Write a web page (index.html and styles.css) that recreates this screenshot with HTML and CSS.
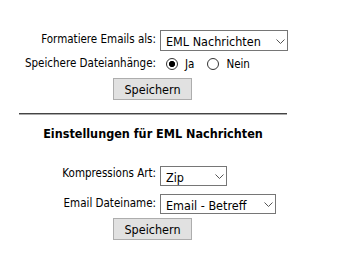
FILE: index.html
```html
<!DOCTYPE html>
<html lang="de">
<head>
    <meta charset="UTF-8">
    <title>Email Export Einstellungen</title>
    <link rel="stylesheet" href="styles.css">
</head>
<body>
    <div class="panel">
        <!-- Allgemeine Einstellungen -->
        <div class="form-grid">
            <label class="label label-mid" for="format">Formatiere Emails als:</label>
            <div class="select-wrap select-wide">
                <select id="format">
                    <option>EML Nachrichten</option>
                </select>
                <svg class="chevron" width="9" height="5" viewBox="0 0 9 5"><path d="M0.5 0.5 L4.5 4.5 L8.5 0.5" fill="none" stroke="#555" stroke-width="1"/></svg>
            </div>

            <span class="label label-mid">Speichere Dateianhänge:</span>
            <div class="radios">
                <label class="radio"><input type="radio" name="att" checked> Ja</label>
                <label class="radio"><input type="radio" name="att"> Nein</label>
            </div>
        </div>
        <div class="actions">
            <button class="btn">Speichern</button>
        </div>

        <hr class="divider">

        <h3 class="section-title">Einstellungen für EML Nachrichten</h3>

        <div class="form-grid grid-eml">
            <label class="label label-top" for="compress">Kompressions Art:</label>
            <div class="select-wrap select-small">
                <select id="compress">
                    <option>Zip</option>
                </select>
                <svg class="chevron" width="9" height="5" viewBox="0 0 9 5"><path d="M0.5 0.5 L4.5 4.5 L8.5 0.5" fill="none" stroke="#555" stroke-width="1"/></svg>
            </div>

            <label class="label label-mid" for="filename">Email Dateiname:</label>
            <div class="select-wrap select-name">
                <select id="filename">
                    <option>Email - Betreff</option>
                </select>
                <svg class="chevron" width="9" height="5" viewBox="0 0 9 5"><path d="M0.5 0.5 L4.5 4.5 L8.5 0.5" fill="none" stroke="#555" stroke-width="1"/></svg>
            </div>
        </div>
        <div class="actions actions-eml">
            <button class="btn">Speichern</button>
        </div>
    </div>
</body>
</html>
```

FILE: styles.css
```css
body {
    margin: 8px;
    background-color: #fff;
    color: #000;
    font-family: "DejaVu Sans Condensed", "DejaVu Sans", sans-serif;
    font-size: 11.5px;
}

.panel {
    width: 290px;
    padding-top: 22px;
}

.form-grid {
    display: grid;
    grid-template-columns: 148px auto;
    column-gap: 4px;
    row-gap: 6px;
    align-items: center;
}

.grid-eml {
    row-gap: 8px;
}

.label {
    text-align: right;
    white-space: nowrap;
}

.label-mid {
    margin-top: -3px;
}

.label-top {
    align-self: start;
}

.select-wrap {
    position: relative;
    height: 21px;
}

.select-wrap select {
    appearance: none;
    -webkit-appearance: none;
    width: 100%;
    height: 100%;
    margin: 0;
    padding: 2px 20px 0 5px;
    border: 1px solid #767676;
    border-radius: 0;
    background-color: #fff;
    color: #000;
    font-family: inherit;
    font-size: 12.5px;
}

.select-wide {
    width: 128px;
}

.select-small {
    width: 67px;
    height: 20px;
}

.select-name {
    width: 116px;
    height: 20px;
}

.chevron {
    position: absolute;
    right: 3px;
    top: 9px;
    pointer-events: none;
}

.select-small .chevron,
.select-name .chevron {
    top: 8px;
}

.radios {
    display: flex;
    gap: 13px;
    padding-left: 6px;
}

.radio {
    display: flex;
    align-items: center;
    gap: 7px;
}

.radio input {
    appearance: none;
    -webkit-appearance: none;
    width: 12px;
    height: 12px;
    margin: 0;
    border: 1px solid #333;
    border-radius: 50%;
    background-color: #fff;
}

.radio input:checked {
    background: radial-gradient(circle, #000 0 2.8px, #fff 3.3px);
}

.actions {
    display: flex;
    justify-content: center;
    margin-top: 7px;
}

.actions-eml {
    margin-top: 4px;
}

.btn {
    width: 79px;
    height: 22px;
    margin-left: -1px;
    padding: 0;
    border: 1px solid #adadad;
    border-radius: 0;
    background-color: #e1e1e1;
    color: #000;
    font-family: inherit;
    font-size: 12.5px;
}

.divider {
    width: 268px;
    margin: 13px auto 0;
    border: none;
    border-top: 1px solid #444;
    border-bottom: 1px solid #aaa;
}

.section-title {
    margin: 11px 0 25px;
    text-align: center;
    font-size: 12.5px;
    font-weight: bold;
}
```
